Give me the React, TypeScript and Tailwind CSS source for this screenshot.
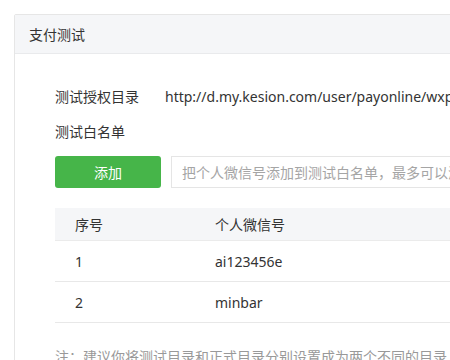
import React from 'react'

const rows = [
  { no: '1', wx: 'ai123456e' },
  { no: '2', wx: 'minbar' },
]

export default function App() {
  return (
    <div
      className="w-[450px] h-[360px] overflow-hidden bg-white pl-[14px] pt-[14px] text-[14px] text-[#333]"
      style={{ fontFamily: '"Noto Sans", "Noto Sans CJK SC", sans-serif' }}
    >
      <div className="w-[640px] border border-[#e6e6e6] rounded-tl-[2px]">
        {/* Header */}
        <div className="h-[39px] flex items-center pl-[14px] bg-[#f5f6f8] border-b border-[#e9eaec]">
          支付测试
        </div>

        {/* Body */}
        <div className="pl-[40px] pt-[32px]">
          <div className="h-[20px] flex items-center">
            <span className="w-[110px]">测试授权目录</span>
            <span>http://d.my.kesion.com/user/payonline/wxpay/</span>
          </div>
          <div className="h-[20px] flex items-center mt-[15px]">测试白名单</div>

          <div className="flex items-center mt-[15px] gap-[10px]">
            <button className="w-[106px] h-[32px] rounded-[3px] bg-[#46b549] text-white">添加</button>
            <input
              className="w-[420px] h-[32px] border border-[#e5e5e5] px-[10px] outline-none placeholder:text-[#a5a5a5]"
              placeholder="把个人微信号添加到测试白名单，最多可以添加20个"
            />
          </div>

          {/* Table */}
          <div className="mt-[20px] w-[560px]">
            <div className="h-[33px] flex items-center bg-[#f5f6f8] border-b border-[#ebebeb]">
              <span className="w-[160px] pl-[20px]">序号</span>
              <span>个人微信号</span>
            </div>
            {rows.map((r) => (
              <div key={r.no} className="h-[41px] flex items-center border-b border-[#e8e8e8]">
                <span className="w-[160px] pl-[20px]">{r.no}</span>
                <span>{r.wx}</span>
              </div>
            ))}
          </div>

          <div className="mt-[23px] text-[#999]">注：建议你将测试目录和正式目录分别设置成为两个不同的目录</div>
        </div>
      </div>
    </div>
  )
}
